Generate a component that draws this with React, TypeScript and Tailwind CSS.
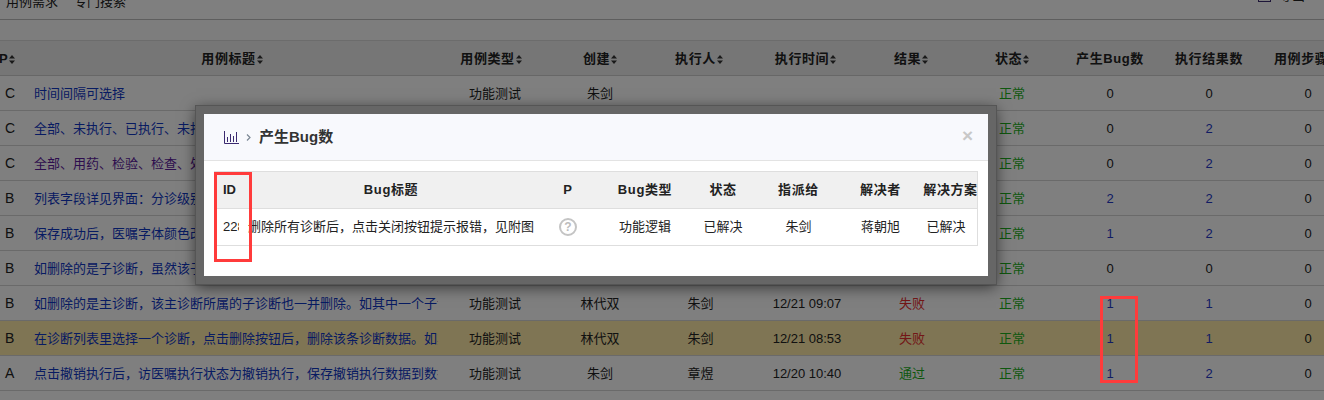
import React from 'react';

const sans = { fontFamily: '"Liberation Sans", "Noto Sans CJK SC", sans-serif' };

type Row = {
  p: string;
  title: string;
  visited?: boolean;
  create: string;
  exec: string;
  time: string;
  result: string;
  bugs: number;
  results: number;
  warn?: boolean;
};

const rows: Row[] = [
  { p: 'C', title: '时间间隔可选择', create: '朱剑', exec: '', time: '', result: '', bugs: 0, results: 0 },
  { p: 'C', title: '全部、未执行、已执行、未打开的医嘱可以按条件筛选显示', create: '朱剑', exec: '朱剑', time: '12/21 10:20', result: '通过', bugs: 0, results: 2 },
  { p: 'C', title: '全部、用药、检验、检查、处置的医嘱可以按类别筛选显示', visited: true, create: '朱剑', exec: '朱剑', time: '12/21 10:18', result: '通过', bugs: 0, results: 2 },
  { p: 'B', title: '列表字段详见界面：分诊级别、患者姓名、诊断名称', create: '林代双', exec: '朱剑', time: '12/21 09:40', result: '失败', bugs: 2, results: 2 },
  { p: 'B', title: '保存成功后，医嘱字体颜色改变为已执行状态的颜色', create: '林代双', exec: '朱剑', time: '12/21 09:30', result: '失败', bugs: 1, results: 2 },
  { p: 'B', title: '如删除的是子诊断，虽然该子诊断被删除但主诊断保留', create: '林代双', exec: '朱剑', time: '12/21 09:20', result: '通过', bugs: 0, results: 0 },
  { p: 'B', title: '如删除的是主诊断，该主诊断所属的子诊断也一并删除。如其中一个子诊断', create: '林代双', exec: '朱剑', time: '12/21 09:07', result: '失败', bugs: 1, results: 1 },
  { p: 'B', title: '在诊断列表里选择一个诊断，点击删除按钮后，删除该条诊断数据。如其中', create: '林代双', exec: '朱剑', time: '12/21 08:53', result: '失败', bugs: 1, results: 1, warn: true },
  { p: 'A', title: '点击撤销执行后，访医嘱执行状态为撤销执行，保存撤销执行数据到数据库', create: '朱剑', exec: '章煜', time: '12/20 10:40', result: '通过', bugs: 1, results: 2 },
];

function SortIcon() {
  return (
    <svg width="6" height="9" viewBox="0 0 6 9" className="ml-px inline-block align-[-1px]">
      <path d="M0 3.5 3 0l3 3.5zM0 5.5 3 9l3-3.5z" fill="#333" />
    </svg>
  );
}

function Count({ value }: { value: number }) {
  return <span className={value > 0 ? 'text-[#2238c8]' : 'text-[#1c1c1c]'}>{value}</span>;
}

function resultColor(result: string) {
  return result === '失败' ? 'text-[#e62e2e]' : 'text-[#1cb01c]';
}

const headCell = 'text-center font-bold text-[13px] text-[#222] tracking-[0.6px] whitespace-nowrap';
const bodyCell = 'text-center text-[13px] text-[#222] whitespace-nowrap';
const bugCols = 'grid-cols-[33px_286px_68px_86px_70px_81px_83px_57px]';

function BugDialog() {
  return (
    <div className="absolute left-[196px] top-[106px] w-[800px] border-8 border-[#666] shadow-[0_0_0_1px_#555,0_3px_14px_rgba(0,0,0,0.6)]">
      <div className="h-[162px] bg-white">
        <div className="relative flex h-[47px] items-center border-b border-[#e3e3e3] bg-[#f8f9fd] pl-[20px]">
          <svg width="15" height="13" viewBox="0 0 15 13" fill="none" stroke="#3b2a70">
            <path d="M.5 0v12.5H15M3.5 6v5M6.5 3v8M9.5 5v6M12.5 1v10" />
          </svg>
          <svg width="5" height="7" viewBox="0 0 5 7" fill="none" stroke="#7b8794" strokeWidth="1.2" className="ml-[7px]">
            <path d="M1 .5 4 3.5 1 6.5" />
          </svg>
          <span className="ml-[8px] text-[15px] font-bold text-[#333]">产生Bug数</span>
          <span className="absolute right-[15px] top-[12px] text-[19px] leading-none font-bold text-[#c8c8c8]">×</span>
        </div>
        <div className="px-[10px] pt-[10px]">
          <div className="w-[764px] overflow-hidden border border-[#dedede]">
            <div className={`grid h-[37px] items-center border-b border-[#dedede] bg-[#f0f0f0] ${bugCols}`}>
              <div className="pl-[8px] text-[13px] font-bold text-[#222]">ID</div>
              <div className={headCell}>Bug标题</div>
              <div className={headCell}>P</div>
              <div className={headCell}>Bug类型</div>
              <div className={headCell}>状态</div>
              <div className={headCell}>指派给</div>
              <div className={headCell}>解决者</div>
              <div className={headCell}>解决方案</div>
            </div>
            <div className={`grid h-[36px] items-center ${bugCols}`}>
              <div className="pl-[8px] text-[13px] text-[#222]">
                <span className="block w-[16px] overflow-hidden whitespace-nowrap">228</span>
              </div>
              <div className="overflow-hidden text-[13px] whitespace-nowrap text-[#222]">删除所有诊断后，点击关闭按钮提示报错，见附图</div>
              <div className="flex justify-center">
                <span className="flex h-[18px] w-[18px] items-center justify-center rounded-full border-2 border-[#c4c4c4] text-[12px] leading-none font-bold text-[#bcbcbc]">?</span>
              </div>
              <div className={bodyCell}>功能逻辑</div>
              <div className={bodyCell}>已解决</div>
              <div className={bodyCell}>朱剑</div>
              <div className={bodyCell}>蒋朝旭</div>
              <div className={`${bodyCell} pr-[9px]`}>已解决</div>
            </div>
          </div>
        </div>
      </div>
    </div>
  );
}

export default function App() {
  const cols = 'grid-cols-[26px_412px_106px_112px_100px_102px_108px_92px_104px_94px_104px]';
  return (
    <div className="relative h-[400px] w-[1324px] overflow-hidden bg-white" style={sans}>
      <div className="flex h-[20px] items-start justify-between overflow-hidden border-b border-[#bdbdbd] text-[13px] text-[#222]">
        <span className="mt-[-6px] pl-[6px] leading-[15px] whitespace-nowrap">用例需求<span className="ml-[16px]">专门搜索</span></span>
        <span className="mt-[-12px] mr-[19px] flex items-end leading-[15px] whitespace-nowrap">
          <span className="mr-[8px] mb-[1px] h-[12px] w-[13px] border border-[#3b2a70]" />
          导出
        </span>
      </div>
      <div className="h-[21px] border-b border-[#d8d8d8] bg-[#fafafa]" />
      <div className={`grid h-[35px] items-center border-b border-[#cfcfcf] bg-[#ececec] pt-px ${cols}`}>
        <div className="ml-[-1px] text-[13px] font-bold text-[#222]">P<SortIcon /></div>
        <div className={headCell}>用例标题<SortIcon /></div>
        <div className={headCell}>用例类型<SortIcon /></div>
        <div className={headCell}>创建<SortIcon /></div>
        <div className={`${headCell} pr-[14px]`}>执行人<SortIcon /></div>
        <div className={`${headCell} pr-[3px]`}>执行时间<SortIcon /></div>
        <div className={`${headCell} pr-[2px]`}>结果<SortIcon /></div>
        <div className={headCell}>状态<SortIcon /></div>
        <div className={headCell}>产生Bug数</div>
        <div className={headCell}>执行结果数</div>
        <div className={headCell}>用例步骤数</div>
      </div>
      {rows.map((row, i) => (
        <div key={i} className={`grid h-[35px] items-center border-b border-[#d4d4d4] pt-px ${cols} ${row.warn ? 'bg-[#feeaa8]' : 'bg-white'}`}>
          <div className="pl-[5px] text-[14px] text-[#222]">{row.p}</div>
          <div className={`overflow-hidden pl-[8px] pr-[2px] text-[13px] whitespace-nowrap ${row.visited ? 'text-[#5c1a9c]' : 'text-[#0f36c4]'}`}>{row.title}</div>
          <div className={`${bodyCell} pl-[8px]`}>功能测试</div>
          <div className={bodyCell}>{row.create}</div>
          <div className={`${bodyCell} pr-[11px]`}>{row.exec}</div>
          <div className={bodyCell}>{row.time}</div>
          <div className={`text-center text-[13px] ${resultColor(row.result)}`}>{row.result}</div>
          <div className="text-center text-[13px] text-[#1cb01c]">正常</div>
          <div className="text-center text-[13px]"><Count value={row.bugs} /></div>
          <div className="text-center text-[13px]"><Count value={row.results} /></div>
          <div className="text-center text-[13px] text-[#1c1c1c]">0</div>
        </div>
      ))}
      <div className="absolute inset-0 bg-black/50" />
      <BugDialog />
      <div className="absolute left-[214px] top-[172px] h-[90px] w-[38px] border-[3px] border-[#ff3b3b]" />
      <div className="absolute left-[1100px] top-[296px] h-[87px] w-[38px] border-[3px] border-[#ff3b3b]" />
    </div>
  );
}
